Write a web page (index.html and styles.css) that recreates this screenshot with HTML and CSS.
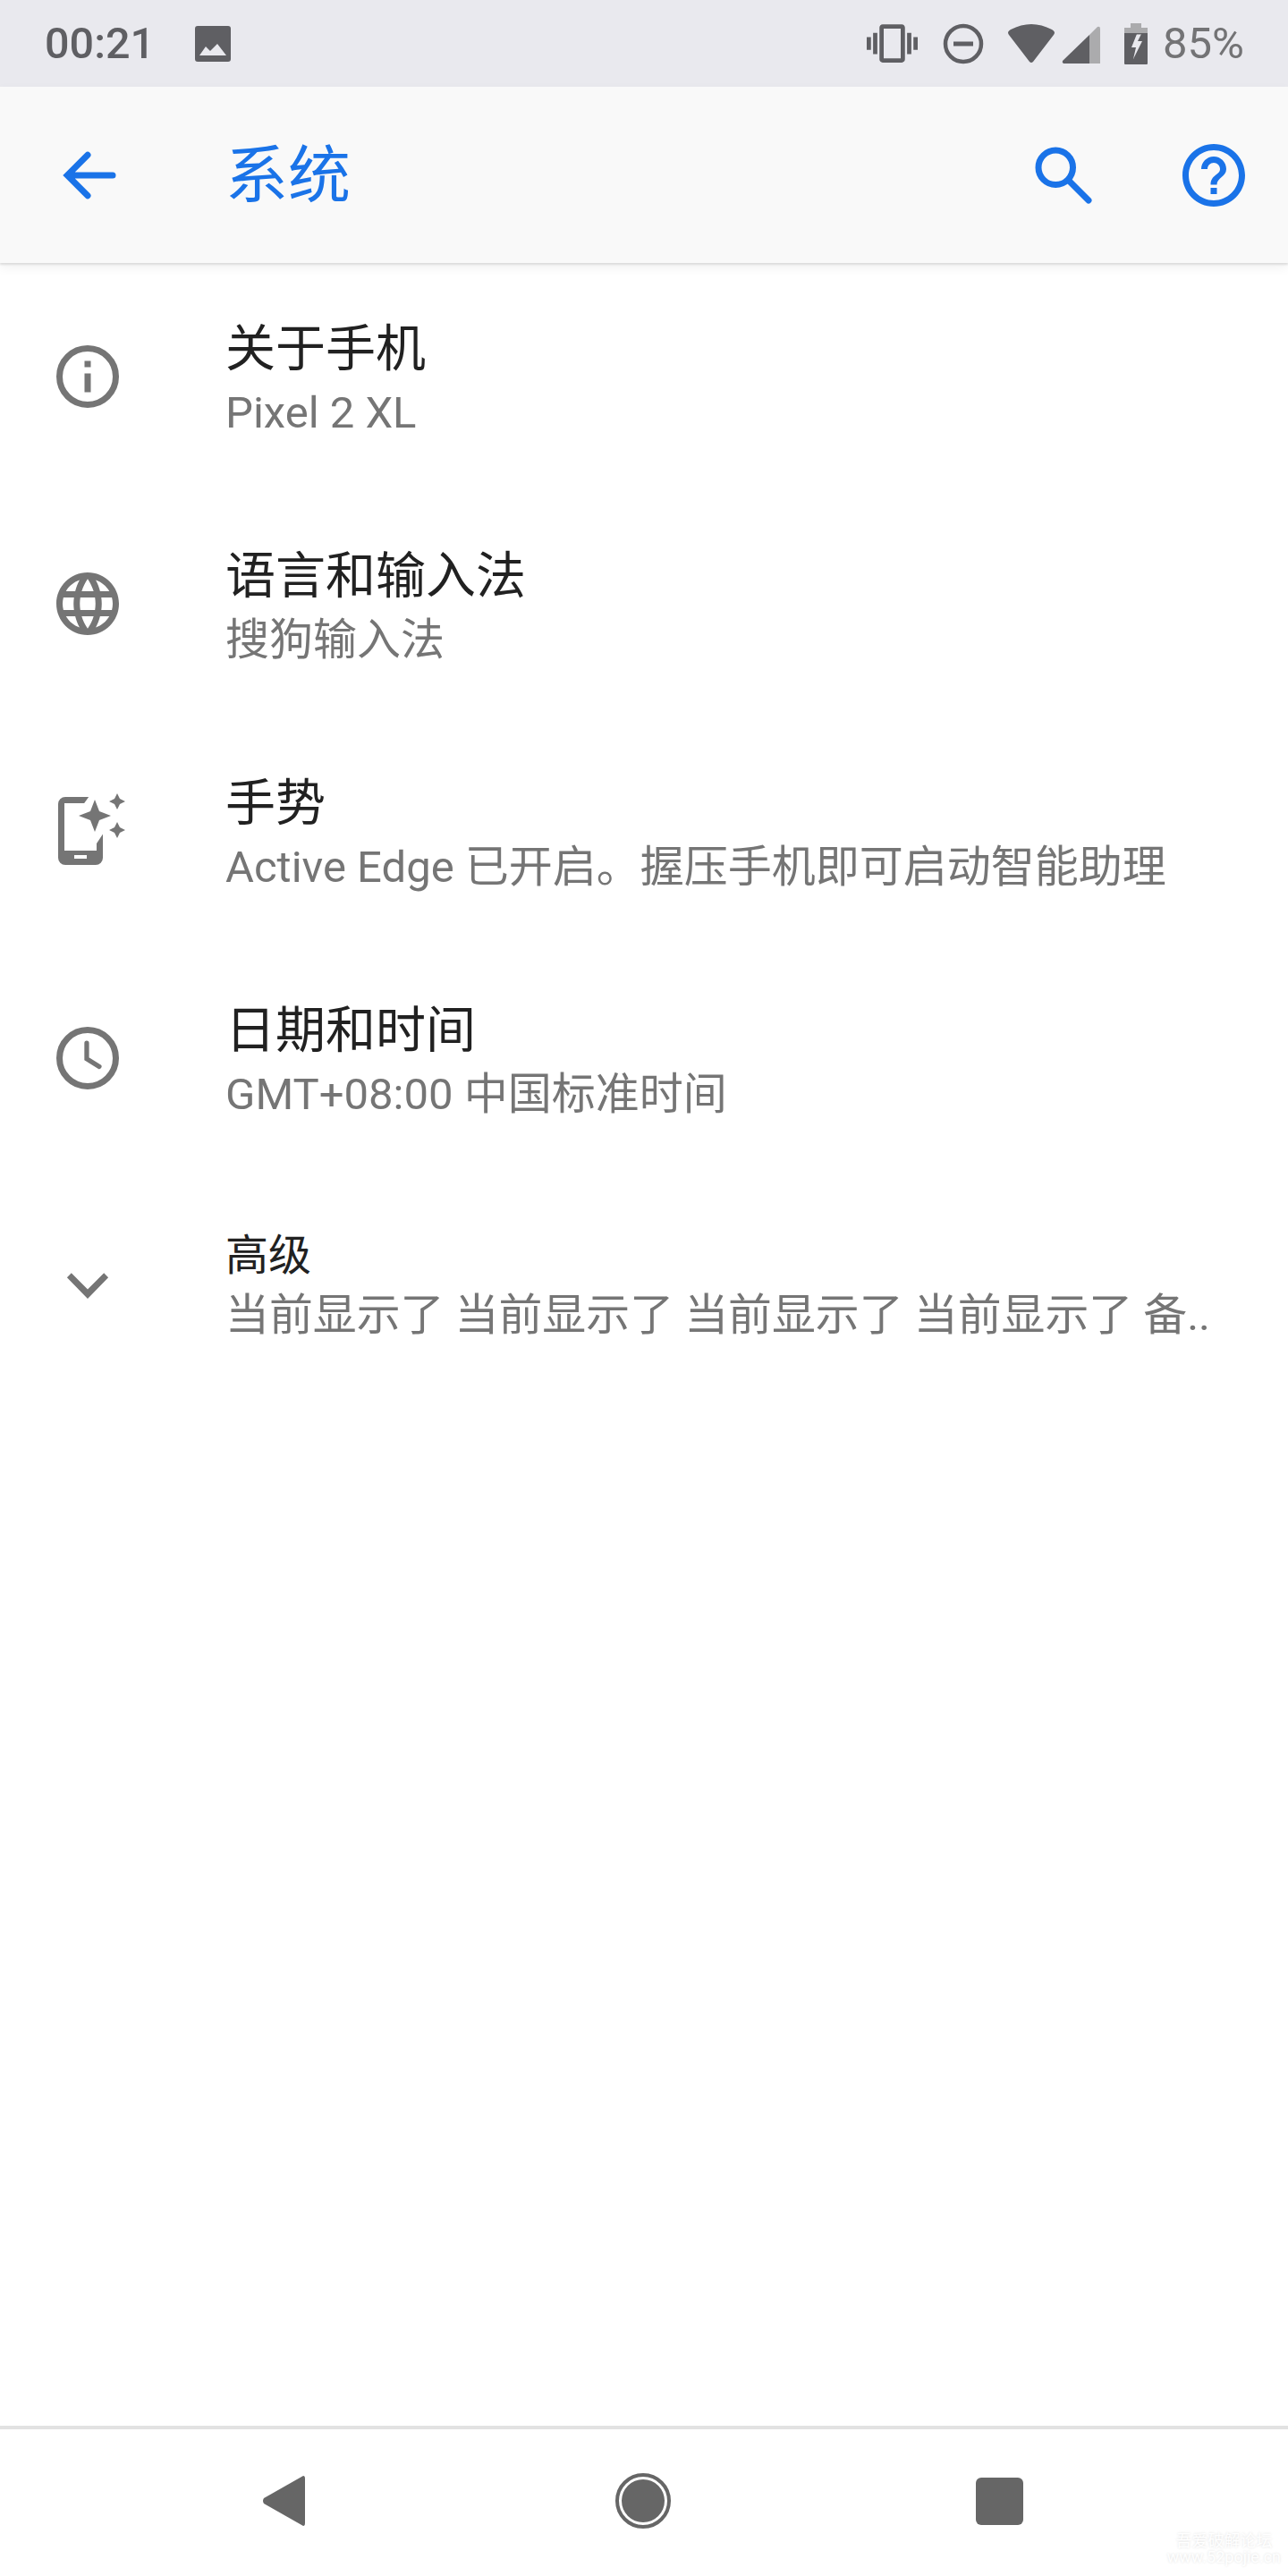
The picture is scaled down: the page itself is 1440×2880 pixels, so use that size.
FILE: index.html
```html
<!DOCTYPE html>
<html lang="zh-CN">
<head>
    <meta charset="UTF-8">
    <meta name="viewport" content="width=device-width, initial-scale=1.0">
    <title>系统</title>
    <link rel="stylesheet" href="styles.css">
</head>
<body>
<div class="phone">
    <div class="status-bar">
        <span class="clock">00:21</span>
        <svg class="ic-photo" viewBox="0 0 40 40"><path fill-rule="evenodd" d="M3 0h34a3 3 0 0 1 3 3v34a3 3 0 0 1-3 3H3a3 3 0 0 1-3-3V3a3 3 0 0 1 3-3zM5 33h30L25 20l-8 8-5-5z"/></svg>
        <div class="status-right">
            <svg class="ic-vibrate" viewBox="0 0 24 24"><path d="M0 15h2V9H0v6zm3 2h2V7H3v10zm19-8v6h2V9h-2zm-3 8h2V7h-2v10zM16.5 3h-9C6.67 3 6 3.67 6 4.5v15c0 .83.67 1.5 1.5 1.5h9c.83 0 1.5-.67 1.5-1.5v-15c0-.83-.67-1.5-1.5-1.5zM16 19H8V5h8v14z"/></svg>
            <svg class="ic-dnd" viewBox="0 0 48 48"><circle cx="24" cy="24" r="20" fill="none" stroke="#5f5f63" stroke-width="4.5"/><rect x="13" y="21.5" width="22" height="5"/></svg>
            <svg class="ic-wifi" viewBox="0 0 54 44"><path d="M1 9Q2 7 4 6Q27-6 50 6Q52 7 53 9Q53 11 52 12L29 42Q27 44 25 42L2 12Q1 11 1 9z"/></svg>
            <svg class="ic-signal" viewBox="0 0 43 42"><path class="light" d="M31 10L40 1Q43 0 43 3V42H31z"/><path d="M31 10V42H2Q0 41 1 39z"/></svg>
            <svg class="ic-battery" viewBox="0 0 26 46"><path class="light" d="M7 0h12v5h7v8H0V5h7z"/><path fill-rule="evenodd" d="M0 11h26v34a1 1 0 0 1-1 1H1a1 1 0 0 1-1-1zM14 12L8 27h5l-3 13 10-20h-5l4-8z"/></svg>
            <span class="battery-text">85%</span>
        </div>
    </div>

    <header class="app-bar">
        <svg class="icon" viewBox="0 0 24 24"><path class="stroke" d="M20 12H6M12 5.5L5.5 12l6.500 6.500"/></svg>
        <h1 class="page-title">系统</h1>
        <svg class="icon ic-search" viewBox="0 0 24 24"><circle class="stroke" cx="9.500" cy="9.500" r="5.500"/><path class="stroke" d="M14 14l6 6"/></svg>
        <svg class="icon ic-help" viewBox="0 0 24 24"><path d="M11 18h2v-2h-2v2zm1-16C6.480 2 2 6.480 2 12s4.480 10 10 10 10-4.480 10-10S17.520 2 12 2zm0 18c-4.410 0-8-3.590-8-8s3.590-8 8-8 8 3.590 8 8-3.590 8-8 8zm0-14c-2.210 0-4 1.790-4 4h2c0-1.100.9-2 2-2s2 .9 2 2c0 2-3 1.750-3 5h2c0-2.250 3-2.500 3-5 0-2.210-1.790-4-4-4z"/></svg>
    </header>

    <main class="settings-list">
        <div class="row">
            <svg class="icon" viewBox="0 0 24 24"><circle class="ring" cx="12" cy="12" r="9"/><path d="M11 7h2v2h-2zM11 11h2v6h-2z"/></svg>
            <div class="row-text">
                <div class="row-title">关于手机</div>
                <div class="row-sub">Pixel 2 XL</div>
            </div>
        </div>
        <div class="row">
            <svg class="icon" viewBox="0 0 24 24"><path d="M11.990 2C6.470 2 2 6.480 2 12s4.470 10 9.990 10C17.520 22 22 17.520 22 12S17.520 2 11.990 2zm6.930 6h-2.950c-.32-1.250-.78-2.450-1.380-3.560 1.840.63 3.370 1.910 4.330 3.560zM12 4.040c.83 1.200 1.480 2.530 1.910 3.960h-3.820c.43-1.430 1.080-2.760 1.910-3.960zM4.260 14C4.100 13.360 4 12.690 4 12s.1-1.360.26-2h3.380c-.08.66-.14 1.320-.14 2 0 .68.06 1.340.14 2H4.260zm.82 2h2.950c.32 1.250.78 2.450 1.380 3.560-1.840-.63-3.370-1.900-4.330-3.560zm2.950-8H5.080c.96-1.660 2.490-2.930 4.330-3.560C8.810 5.550 8.350 6.750 8.030 8zM12 19.960c-.83-1.200-1.480-2.530-1.910-3.960h3.820c-.43 1.430-1.080 2.760-1.910 3.960zM14.340 14H9.660c-.09-.66-.16-1.320-.16-2 0-.68.07-1.350.16-2h4.680c.09.65.16 1.320.16 2 0 .68-.07 1.340-.16 2zm.25 5.560c.6-1.110 1.060-2.310 1.380-3.560h2.950c-.96 1.650-2.490 2.930-4.330 3.560zM16.360 14c.08-.66.14-1.320.14-2 0-.68-.06-1.340-.14-2h3.380c.16.64.26 1.310.26 2s-.1 1.360-.26 2h-3.380z"/></svg>
            <div class="row-text">
                <div class="row-title">语言和输入法</div>
                <div class="row-sub">搜狗输入法</div>
            </div>
        </div>
        <div class="row">
            <svg class="icon" viewBox="0 0 84 84">
                <path fill-rule="evenodd" d="M17 4h34a8 8 0 0 1 8 8v60a8 8 0 0 1-8 8H17a8 8 0 0 1-8-8V12a8 8 0 0 1 8-8zM16 11v53h36V11zM27 69v4h14v-4z"/>
                <path class="cut" d="M46 0L36 14 30 25 45 34 52 56 60 44H84V0z"/>
                <path d="M50 7L55 20 68 25 55 30 50 43 45 30 32 25 45 20zM75 0L78 6 84 9 78 12 75 18 72 12 66 9 72 6zM75 32L78 38 84 41 78 44 75 50 72 44 66 41 72 38z"/>
            </svg>
            <div class="row-text">
                <div class="row-title">手势</div>
                <div class="row-sub">Active Edge 已开启。握压手机即可启动智能助理</div>
            </div>
        </div>
        <div class="row">
            <svg class="icon" viewBox="0 0 24 24"><circle class="ring" cx="12" cy="12" r="9"/><path class="hand" d="M11.700 7.200v5l4 2.500"/></svg>
            <div class="row-text">
                <div class="row-title">日期和时间</div>
                <div class="row-sub">GMT+08:00 中国标准时间</div>
            </div>
        </div>
        <div class="row">
            <svg class="icon" viewBox="0 0 24 24"><path d="M6.800 8.100L12 13.300l5.200-5.200 1.400 1.400L12 16.300 5.400 9.500z"/></svg>
            <div class="row-text compact">
                <div class="row-title">高级</div>
                <div class="row-sub">当前显示了 当前显示了 当前显示了 当前显示了 备..</div>
            </div>
        </div>
    </main>

    <nav class="nav-bar">
        <svg class="nav-back" viewBox="0 0 48 56"><path d="M46 0Q48 0 48 3V53Q48 56 46 56L2 31Q0 28 2 25z"/></svg>
        <svg class="nav-home" viewBox="0 0 62 62"><circle cx="31" cy="31" r="29" fill="none" stroke="#666" stroke-width="4"/><circle cx="31" cy="31" r="24"/></svg>
        <div class="nav-recent"></div>
    </nav>

    <div class="watermark">吾爱破解论坛<br>www.52pojie.cn</div>
</div>
</body>
</html>
```

FILE: styles.css
```css
* {
    box-sizing: border-box;
}
html, body {
    margin: 0;
    padding: 0;
    background-color: #fff;
}
.phone {
    position: relative;
    width: 1440px;
    height: 2880px;
    display: flex;
    flex-direction: column;
    overflow: hidden;
    font-family: Roboto, "Noto Sans CJK SC", sans-serif;
}
svg {
    display: block;
    flex: none;
}

/* status bar */
.status-bar {
    height: 97px;
    display: flex;
    align-items: center;
    padding: 0 50px;
    background-color: #e9e9ee;
    color: #5f5f63;
    fill: #5f5f63;
}
.clock {
    font-size: 48.500px;
    font-weight: 500;
    width: 168px;
}
.ic-photo {
    width: 40px;
    height: 40px;
}
.status-right {
    margin-left: auto;
    display: flex;
    align-items: center;
}
.ic-vibrate {
    width: 57px;
    height: 57px;
}
.ic-dnd {
    width: 48px;
    height: 48px;
    margin-left: 27px;
}
.ic-wifi {
    width: 54px;
    height: 44px;
    margin-left: 25px;
}
.ic-signal {
    width: 43px;
    height: 42px;
    margin-left: 7px;
    margin-top: 3px;
}
.ic-battery {
    width: 26px;
    height: 46px;
    margin-left: 27px;
}
.light {
    fill: #ababad;
}
.battery-text {
    width: 90px;
    margin-left: 17px;
    font-size: 49px;
    color: #737375;
}

/* toolbar */
.app-bar {
    height: 197px;
    display: flex;
    align-items: center;
    padding: 0 41px 0 56px;
    background-color: #f9f9f9;
    box-shadow: 0 2px 2px #dcdcdc, 0 5px 12px rgba(0, 0, 0, 0.06);
    fill: #1a73e8;
    stroke: #1a73e8;
    stroke-width: 0;
    position: relative;
}
.icon {
    width: 84px;
    height: 84px;
}
.stroke {
    fill: none;
    stroke-width: 2;
    stroke-linecap: round;
}
.page-title {
    margin: 0 0 10px 112px;
    flex: 1;
    font-size: 70px;
    font-weight: 400;
    color: #1a73e8;
}
.ic-help {
    margin-left: 84px;
}

/* list */
.settings-list {
    flex: 1;
    fill: #757575;
}
.row {
    height: 254px;
    display: flex;
    align-items: center;
    padding-left: 56px;
}
.row-text {
    margin-left: 112px;
    padding-top: 10px;
}
.row-title {
    font-size: 56px;
    line-height: 72px;
    color: #212121;
}
.row-sub {
    font-size: 49px;
    line-height: 72px;
    color: #757575;
}
.row-text.compact {
    padding-top: 0;
}
.compact .row-title {
    font-size: 48px;
    line-height: 67px;
}
.compact .row-sub {
    font-size: 48.900px;
    line-height: 67px;
}
.ring, .hand {
    fill: none;
    stroke: #757575;
    stroke-width: 2;
}
.hand {
    stroke-width: 1.500;
    stroke-linecap: round;
}
.cut {
    fill: #fff;
}

/* bottom nav */
.nav-bar {
    height: 168px;
    border-top: 4px solid #e2e2e2;
    display: flex;
    align-items: center;
    fill: #666;
    padding: 0 0 4px 293px;
}
.nav-back {
    width: 48px;
    height: 56px;
}
.nav-home {
    width: 62px;
    height: 62px;
    margin-left: 347px;
}
.nav-recent {
    width: 53px;
    height: 53px;
    margin-left: 341px;
    border-radius: 6px;
    background-color: #666;
}

.watermark {
    position: absolute;
    right: 8px;
    bottom: 12px;
    font-size: 18px;
    line-height: 18px;
    text-align: center;
    color: #fff;
    text-shadow: 0 0 3px #ddd;
}
```
